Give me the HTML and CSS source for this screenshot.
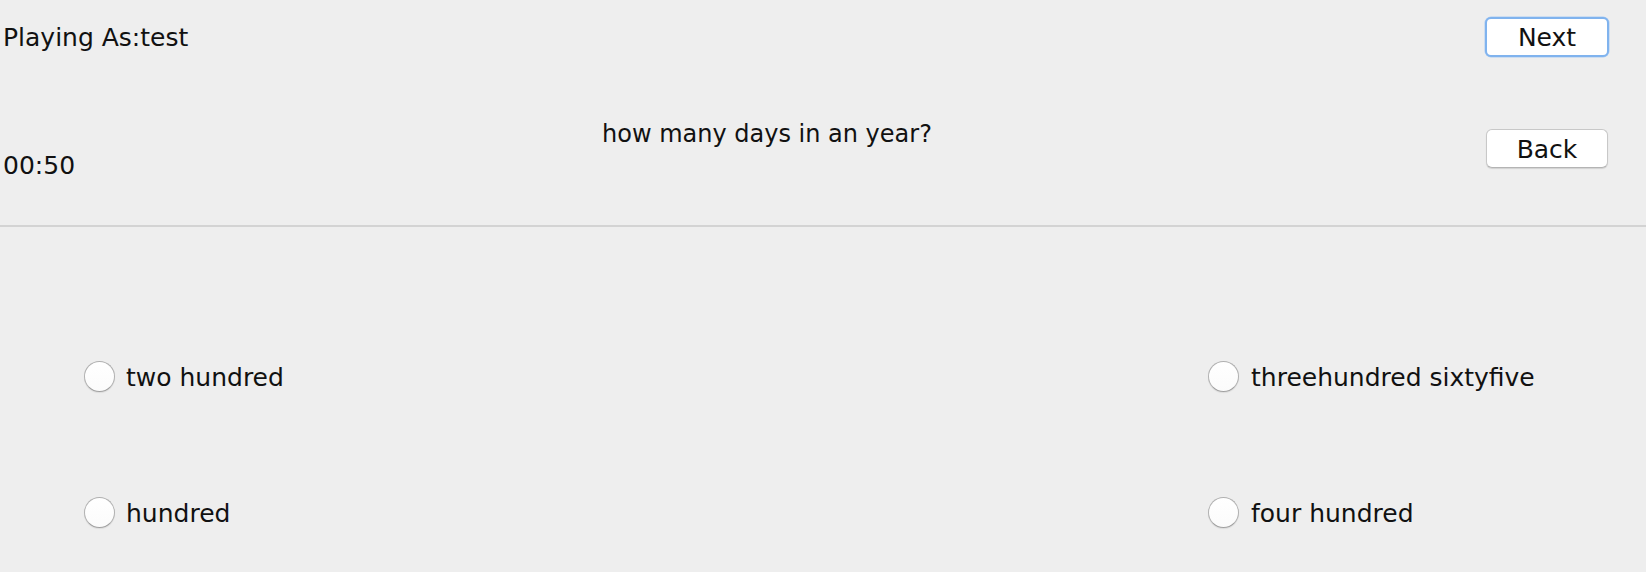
FILE: index.html
```html
<!DOCTYPE html>
<html>
<head>
<meta charset="utf-8">
<link rel="stylesheet" href="styles.css">
</head>
<body>
<div class="app">
  <header class="top">
    <div class="info">
      <div class="player">Playing As:test</div>
      <div class="timer">00:50</div>
    </div>
    <div class="question">how many days in an year?</div>
    <div class="actions">
      <button class="btn btn-focus">Next</button>
      <button class="btn">Back</button>
    </div>
  </header>
  <div class="divider"></div>
  <main class="options">
    <label class="opt opt-left"><span class="radio"></span><span class="opt-text">two hundred</span></label>
    <label class="opt opt-right"><span class="radio"></span><span class="opt-text">threehundred sixtyfive</span></label>
    <label class="opt opt-left"><span class="radio"></span><span class="opt-text">hundred</span></label>
    <label class="opt opt-right"><span class="radio"></span><span class="opt-text">four hundred</span></label>
  </main>
</div>
</body>
</html>
```

FILE: styles.css
```css
html, body {
  margin: 0;
  padding: 0;
  background: #eeeeee;
}
body {
  font-family: "DejaVu Sans", "Liberation Sans", sans-serif;
  font-size: 25px;
  line-height: 28px;
  color: #111;
  width: 1646px;
  height: 572px;
  overflow: hidden;
}
.top {
  display: flex;
  height: 225px;
}
.info {
  width: 599px;
  padding-left: 3px;
  padding-top: 24px;
  display: flex;
  flex-direction: column;
}
.timer {
  margin-top: 100px;
}
.question {
  flex: 1;
  font-size: 24px;
  padding-top: 120px;
}
.actions {
  display: flex;
  flex-direction: column;
  align-items: center;
  padding-top: 17px;
  padding-right: 37px;
  width: 124px;
}
.btn {
  font: inherit;
  color: #111;
  width: 122px;
  height: 39px;
  background: #ffffff;
  border: 1px solid #c8c8c8;
  border-bottom-color: #b4b4b4;
  border-radius: 6px;
  box-shadow: 0 1px 1px rgba(0, 0, 0, 0.12);
  padding: 2px 0 0;
  margin: 0;
}
.btn-focus {
  width: 124px;
  height: 40px;
  border: 2px solid #80b3ee;
  box-shadow: 0 0 0 0.5px #a9cbf3;
  padding: 1px 0 0;
  margin-bottom: 72px;
}
.divider {
  height: 2px;
  background: #d3d3d3;
}
.options {
  display: grid;
  grid-template-columns: 1208px 1fr;
  grid-auto-rows: 136px;
  padding-top: 81px;
}
.opt {
  display: flex;
  align-items: center;
}
.opt-left {
  padding-left: 84px;
}
.radio {
  width: 29px;
  height: 29px;
  border-radius: 50%;
  border: 1px solid #b0b0b0;
  border-bottom-color: #a0a0a0;
  background: linear-gradient(#ffffff, #fbfbfb);
  box-shadow: 0 1px 1px rgba(0, 0, 0, 0.08);
  flex: none;
}
.opt-text {
  margin-left: 11px;
  padding-top: 3px;
}
.opt-right .opt-text {
  margin-left: 12px;
}
```
